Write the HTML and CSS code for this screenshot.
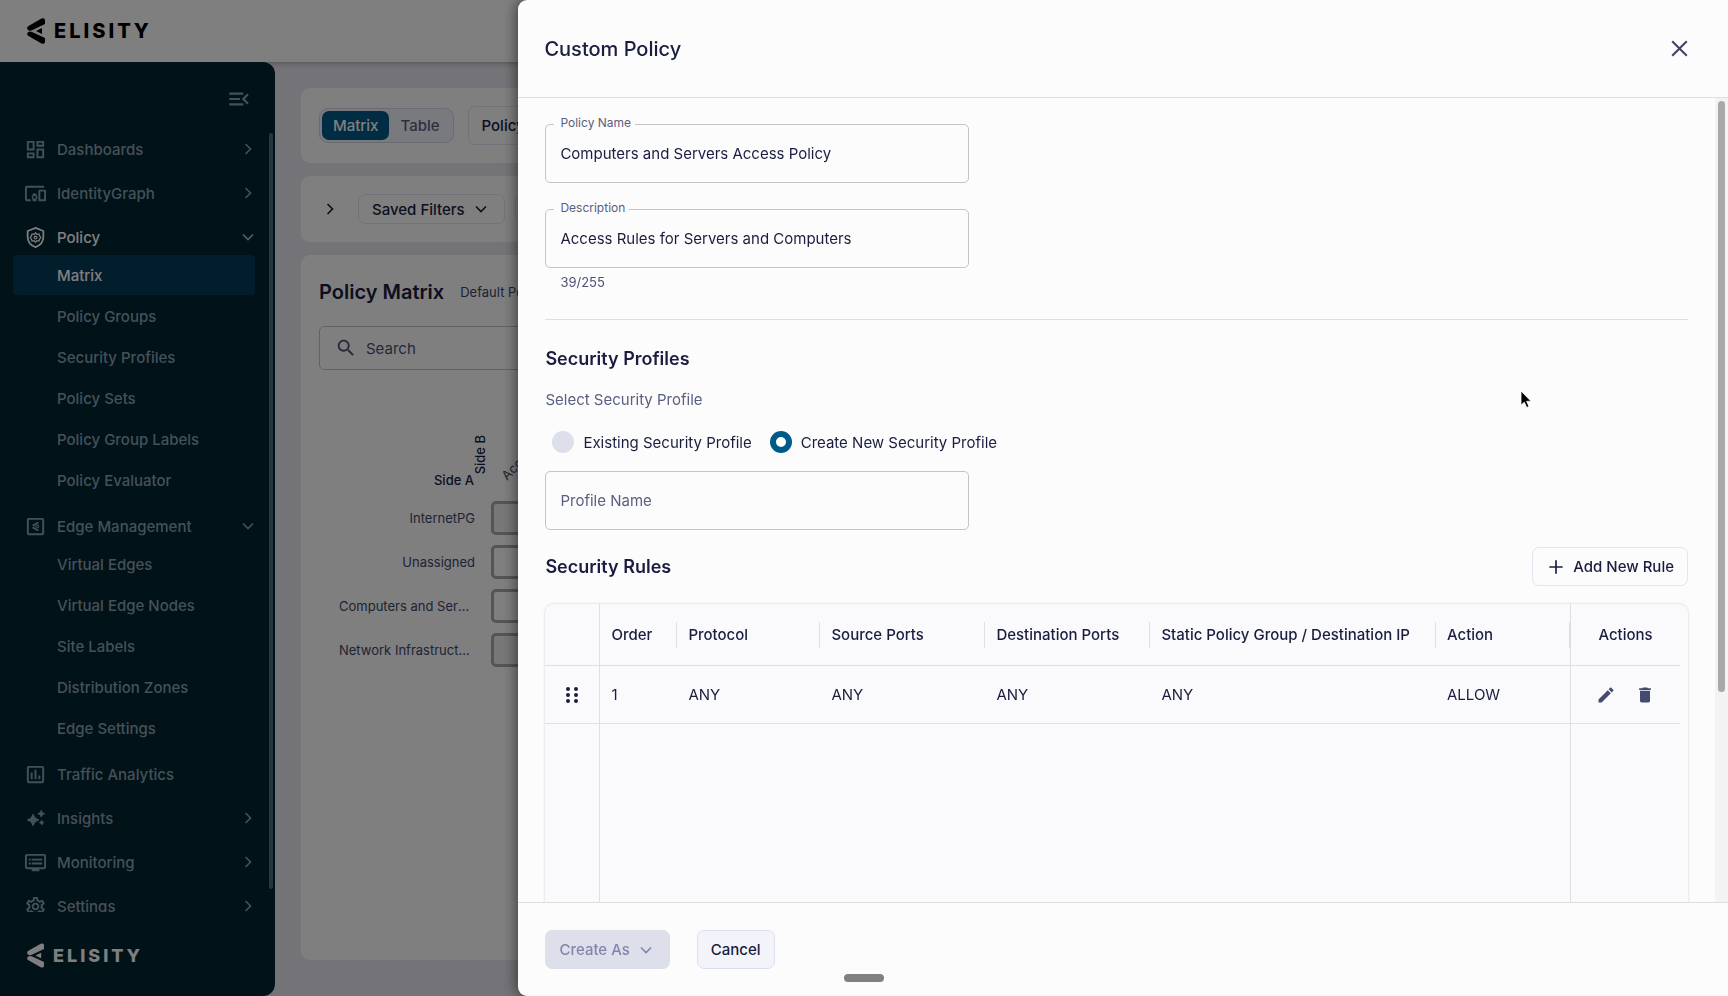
FILE: index.html
```html
<!DOCTYPE html>
<html lang="en">
<head>
  <meta charset="UTF-8" />
  <meta name="viewport" content="width=device-width, initial-scale=1.0" />
  <title>Elisity - Policy Matrix</title>
  <link rel="stylesheet" href="styles.css">
</head>
<body>
  <svg class="sprite" aria-hidden="true">
    <symbol id="chevron-right" viewBox="0 0 24 24"><path d="M9 6l6 6-6 6" fill="none" stroke="currentColor" stroke-width="2" /></symbol>
    <symbol id="chevron-down" viewBox="0 0 24 24"><path d="M6 9l6 6 6-6" fill="none" stroke="currentColor" stroke-width="2" /></symbol>
    <symbol id="logo" viewBox="0 0 18 26">
      <path d="M1.5 8L14.500.6Q18-.8 18 2.500V6L5 12.300Q2.500 13.200 1 12Q-1 9.500 1.500 8zM1.500 18L14.500 25.400Q18 26.800 18 23.500V20L5 13.900Q2.500 12.900 1 14.200Q-1 16.500 1.500 18z" fill="currentColor" />
      <path d="M9 13l6-3v6z" fill="currentColor" />
    </symbol>
  </svg>

  <header class="topbar">
    <a class="brand" href="#"><svg class="brand-mark"><use href="#logo" /></svg><span>ELISITY</span></a>
  </header>

  <div class="layout">
    <aside class="sidebar">
      <button class="collapse" aria-label="Collapse menu">
        <svg viewBox="0 0 24 24"><path d="M3 18h13v-2H3v2zM3 6v2h13V6H3zm0 7h10v-2H3v2zm18 2.59L17.42 12 21 8.41 19.59 7l-5 5 5 5L21 15.59z" /></svg>
      </button>
      <div class="nav-wrap">
        <nav class="nav">
          <a class="item" href="#">
            <svg viewBox="0 0 24 24"><path d="M19 5v2h-4V5h4M9 5v6H5V5h4m10 8v6h-4v-6h4M9 17v2H5v-2h4M21 3h-8v6h8V3zM11 3H3v10h8V3zm10 8h-8v10h8V11zm-10 4H3v6h8v-6z" /></svg>
            <span>Dashboards</span><svg class="arrow"><use href="#chevron-right" /></svg>
          </a>
          <a class="item" href="#">
            <svg viewBox="0 0 24 24"><path d="M3 6h18V4H3c-1.1 0-2 .9-2 2v12c0 1.1.9 2 2 2h4v-2H3V6zm10 6H9v1.78c-.61.55-1 1.33-1 2.22s.39 1.67 1 2.22V20h4v-1.78c.61-.55 1-1.34 1-2.22s-.39-1.67-1-2.22V12zm-2 5.5c-.83 0-1.5-.67-1.5-1.5s.67-1.5 1.5-1.5 1.5.67 1.5 1.5-.67 1.5-1.5 1.5zM22 8h-6c-.5 0-1 .5-1 1v10c0 .5.5 1 1 1h6c.5 0 1-.5 1-1V9c0-.5-.5-1-1-1zm-1 10h-4v-8h4v8z" /></svg>
            <span>IdentityGraph</span><svg class="arrow"><use href="#chevron-right" /></svg>
          </a>
          <div class="group">
            <a class="item open" href="#">
              <svg class="line" viewBox="0 0 24 24">
                <path d="M12 2l8.200 3.200v6c0 5-3.400 9-8.200 10.800-4.800-1.800-8.200-5.800-8.200-10.800v-6z" stroke-width="1.800" />
                <path d="M12 7l1.400 1.700 2.200-.400.700 2 1.200 1.700-1.200 1.700-.700 2-2.200-.400L12 17l-1.400-1.700-2.200.400-.700-2L6.500 12l1.200-1.700.700-2 2.200.400z" stroke-width="1.300" />
                <circle cx="12" cy="12" r="1.500" stroke-width="1.200" />
              </svg>
              <span>Policy</span><svg class="arrow"><use href="#chevron-down" /></svg>
            </a>
            <div class="sub">
              <a class="active" href="#">Matrix</a>
              <a href="#">Policy Groups</a>
              <a href="#">Security Profiles</a>
              <a href="#">Policy Sets</a>
              <a href="#">Policy Group Labels</a>
              <a href="#">Policy Evaluator</a>
            </div>
          </div>
          <div class="group">
            <a class="item" href="#">
              <svg class="line" viewBox="0 0 24 24">
                <rect x="4" y="4" width="16" height="16" rx="1" stroke-width="2" />
                <path d="M15 8l-6 3M9 13l6 3.200" stroke-width="2" />
                <path d="M11.500 12l3.500-1.500v3z" stroke-width="1" />
              </svg>
              <span>Edge Management</span><svg class="arrow"><use href="#chevron-down" /></svg>
            </a>
            <div class="sub">
              <a href="#">Virtual Edges</a>
              <a href="#">Virtual Edge Nodes</a>
              <a href="#">Site Labels</a>
              <a href="#">Distribution Zones</a>
              <a href="#">Edge Settings</a>
            </div>
          </div>
          <a class="item" href="#">
            <svg viewBox="0 0 24 24"><path d="M19 3H5c-1.100 0-2 .9-2 2v14c0 1.100.9 2 2 2h14c1.100 0 2-.9 2-2V5c0-1.100-.9-2-2-2zm0 16H5V5h14v14zM7 10h2v7H7zm4-3h2v10h-2zm4 6h2v4h-2z" /></svg>
            <span>Traffic Analytics</span>
          </a>
          <a class="item" href="#">
            <svg viewBox="0 0 24 24"><path d="M9.500 7.500l2 4 4 2-4 2-2 4-2-4-4-2 4-2zM18 3.500l1.100 2.400 2.400 1.100-2.400 1.100L18 10.500l-1.100-2.400L14.500 7l2.400-1.100zM18.500 14l.8 1.500 1.500.8-1.500.8-.8 1.500-.8-1.500-1.500-.8 1.500-.8z" stroke="currentColor" stroke-width="1" /></svg>
            <span>Insights</span><svg class="arrow"><use href="#chevron-right" /></svg>
          </a>
          <a class="item" href="#">
            <svg viewBox="0 0 24 24"><path d="M21 3H3c-1.100 0-2 .9-2 2v12c0 1.100.9 2 2 2h5v2h8v-2h5c1.100 0 1.990-.9 1.990-2L23 5c0-1.100-.9-2-2-2zm0 14H3V5h18v12zm-2-9H8v2h11V8zm0 4H8v2h11v-2zM7 8H5v2h2V8zm0 4H5v2h2v-2z" /></svg>
            <span>Monitoring</span><svg class="arrow"><use href="#chevron-right" /></svg>
          </a>
          <a class="item" href="#">
            <svg viewBox="0 0 24 24"><path d="M19.430 12.980c.04-.32.07-.64.07-.98 0-.34-.03-.66-.07-.98l2.110-1.650c.19-.15.24-.42.12-.64l-2-3.460c-.09-.16-.26-.25-.44-.25-.06 0-.12.01-.17.03l-2.490 1c-.52-.4-1.080-.73-1.690-.98l-.38-2.650C14.460 2.180 14.250 2 14 2h-4c-.25 0-.46.18-.49.42l-.38 2.650c-.61.25-1.170.59-1.690.98l-2.490-1c-.06-.02-.12-.03-.18-.03-.17 0-.34.09-.43.25l-2 3.460c-.13.22-.07.49.12.64l2.110 1.650c-.04.32-.07.65-.07.98 0 .33.03.66.07.98l-2.110 1.650c-.19.15-.24.42-.12.64l2 3.460c.09.16.26.25.44.25.06 0 .12-.01.17-.03l2.490-1c.52.4 1.080.73 1.690.98l.38 2.650c.03.24.24.42.49.42h4c.25 0 .46-.18.49-.42l.38-2.650c.61-.25 1.170-.59 1.690-.98l2.490 1c.06.02.12.03.18.03.17 0 .34-.09.43-.25l2-3.460c.12-.22.07-.49-.12-.64l-2.110-1.650zm-1.980-1.710c.04.31.05.52.05.73 0 .21-.02.43-.05.73l-.14 1.130.89.7 1.080.84-.7 1.210-1.270-.51-1.040-.42-.9.68c-.43.32-.84.56-1.250.73l-1.060.43-.16 1.130-.2 1.350h-1.400l-.19-1.350-.16-1.130-1.060-.43c-.43-.18-.83-.41-1.230-.71l-.91-.7-1.060.43-1.270.51-.7-1.210 1.080-.84.89-.7-.14-1.130c-.03-.31-.05-.54-.05-.74s.02-.43.05-.73l.14-1.130-.89-.7-1.080-.84.7-1.210 1.270.51 1.040.42.9-.68c.43-.32.84-.56 1.250-.73l1.060-.43.16-1.130.2-1.350h1.390l.19 1.350.16 1.130 1.060.43c.43.18.83.41 1.230.71l.91.7 1.060-.43 1.270-.51.7 1.210-1.070.85-.89.7.14 1.130zM12 8c-2.210 0-4 1.790-4 4s1.790 4 4 4 4-1.790 4-4-1.790-4-4-4zm0 6c-1.100 0-2-.9-2-2s.9-2 2-2 2 .9 2 2-.9 2-2 2z" /></svg>
            <span>Settings</span><svg class="arrow"><use href="#chevron-right" /></svg>
          </a>
        </nav>
        <div class="nav-track"><div class="nav-thumb"></div></div>
      </div>
      <div class="sidebar-foot">
        <a class="brand small" href="#"><svg class="brand-mark"><use href="#logo" /></svg><span>ELISITY</span></a>
      </div>
    </aside>

    <main class="main">
      <section class="card toolbar">
        <div class="segmented">
          <button class="on">Matrix</button>
          <button>Table</button>
        </div>
        <button class="btn outline">Policy Set</button>
      </section>
      <section class="card filters">
        <button class="icon-btn" aria-label="Expand filters"><svg><use href="#chevron-right" /></svg></button>
        <button class="btn outline compact">Saved Filters <svg><use href="#chevron-down" /></svg></button>
        <button class="btn outline compact">Filters</button>
      </section>
      <section class="card matrix-card">
        <div class="matrix-title">
          <h1>Policy Matrix</h1>
          <span>Default Policy Set</span>
        </div>
        <div class="search">
          <svg viewBox="0 0 24 24"><path d="M15.500 14h-.79l-.28-.27C15.410 12.590 16 11.110 16 9.500 16 5.910 13.090 3 9.500 3S3 5.910 3 9.500 5.910 16 9.500 16c1.610 0 3.090-.59 4.230-1.570l.27.28v.79l5 4.990L20.490 19l-4.990-5zm-6 0C7.010 14 5 11.990 5 9.500S7.010 5 9.500 5 14 7.010 14 9.500 11.990 14 9.500 14z" /></svg>
          <input type="text" placeholder="Search" aria-label="Search" />
        </div>
        <div class="matrix">
          <div class="axes"><span class="side-a">Side A</span><span class="side-b">Side B</span></div>
          <div class="col-head"><span>Access Points</span></div>
          <div class="row-label">InternetPG</div><div class="cell filled"></div>
          <div class="row-label">Unassigned</div><div class="cell"></div>
          <div class="row-label">Computers and Servers</div><div class="cell"></div>
          <div class="row-label">Network Infrastructure</div><div class="cell filled"></div>
        </div>
      </section>
    </main>
  </div>

  <div class="backdrop"></div>

  <div class="drawer" role="dialog" aria-labelledby="drawer-title">
    <div class="drawer-head">
      <h2 id="drawer-title">Custom Policy</h2>
      <button class="close" aria-label="Close"><svg viewBox="0 0 24 24"><path d="M5 5l14 14M19 5L5 19" fill="none" stroke="currentColor" stroke-width="2" /></svg></button>
    </div>

    <div class="drawer-body">
      <form class="content">
        <div class="field">
          <label for="policy-name">Policy Name</label>
          <input type="text" id="policy-name" value="Computers and Servers Access Policy" />
        </div>
        <div class="field">
          <label for="description">Description</label>
          <input type="text" id="description" value="Access Rules for Servers and Computers" />
          <p class="helper">39/255</p>
        </div>
        <hr />
        <h3>Security Profiles</h3>
        <p class="hint" id="profile-hint">Select Security Profile</p>
        <div class="radios" role="radiogroup" aria-labelledby="profile-hint">
          <label><input type="radio" name="profile" />Existing Security Profile</label>
          <label><input type="radio" name="profile" checked />Create New Security Profile</label>
        </div>
        <div class="field">
          <input type="text" id="profile-name" placeholder="Profile Name" aria-label="Profile Name" />
        </div>
        <div class="rules-head">
          <h3>Security Rules</h3>
          <button type="button" class="btn outline"><svg viewBox="0 0 24 24"><path d="M12 4v16M4 12h16" fill="none" stroke="currentColor" stroke-width="2" /></svg>Add New Rule</button>
        </div>
        <div class="table-wrap">
          <table class="rules">
            <colgroup>
              <col class="c-drag"><col class="c-order"><col class="c-protocol"><col class="c-ports"><col class="c-ports"><col><col class="c-action"><col class="c-actions">
            </colgroup>
            <thead>
              <tr>
                <th class="pin-left"></th>
                <th><span>Order</span></th>
                <th><span>Protocol</span></th>
                <th><span>Source Ports</span></th>
                <th><span>Destination Ports</span></th>
                <th><span>Static Policy Group / Destination IP</span></th>
                <th><span>Action</span></th>
                <th class="pin-right">Actions</th>
              </tr>
            </thead>
            <tbody>
              <tr>
                <td class="pin-left">
                  <svg class="drag" viewBox="0 0 14 18"><circle cx="3" cy="3" r="2" /><circle cx="11" cy="3" r="2" /><circle cx="3" cy="9" r="2" /><circle cx="11" cy="9" r="2" /><circle cx="3" cy="15" r="2" /><circle cx="11" cy="15" r="2" /></svg>
                </td>
                <td>1</td>
                <td>ANY</td>
                <td>ANY</td>
                <td>ANY</td>
                <td>ANY</td>
                <td>ALLOW</td>
                <td class="pin-right">
                  <div class="row-actions">
                    <button type="button" aria-label="Edit rule"><svg viewBox="0 0 24 24"><path d="M3 17.250V21h3.750L17.810 9.940l-3.750-3.750L3 17.250zM20.710 7.040c.39-.39.39-1.020 0-1.410l-2.340-2.340c-.39-.39-1.020-.39-1.410 0l-1.830 1.830 3.750 3.750 1.830-1.830z" /></svg></button>
                    <button type="button" aria-label="Delete rule"><svg viewBox="0 0 24 24"><path d="M6 19c0 1.100.9 2 2 2h8c1.100 0 2-.9 2-2V7H6v12zM19 4h-3.500l-1-1h-5l-1 1H5v2h14V4z" /></svg></button>
                  </div>
                </td>
              </tr>
              <tr class="filler">
                <td class="pin-left"></td><td colspan="6"></td><td class="pin-right"></td>
              </tr>
            </tbody>
          </table>
        </div>
      </form>
      <div class="track"><div class="thumb"></div></div>
    </div>

    <div class="drawer-foot">
      <button class="btn create" disabled>Create As <svg><use href="#chevron-down" /></svg></button>
      <button class="btn cancel">Cancel</button>
    </div>
  </div>

  <div class="grab-handle"></div>
  <svg class="pointer" viewBox="0 0 12 19"><path d="M1 1v14.200l3.300-3 2.400 5.300 2.300-1-2.400-5.200H11z" fill="#000" stroke="#fff" stroke-width=".8" /></svg>
</body>
</html>
```
FILE: styles.css
```css
* {
  box-sizing: border-box;
}
body {
  margin: 0;
  height: 100vh;
  display: flex;
  flex-direction: column;
  overflow: hidden;
  font-family: Inter, "Liberation Sans", sans-serif;
  font-size: 15px;
  color: #1a1d3f;
  background: #e8e9f0;
}
h1, h2, h3, p {
  margin: 0;
}
a {
  color: inherit;
  text-decoration: none;
}
button, input {
  font: inherit;
  color: inherit;
}
button {
  padding: 0;
  border: none;
  background: none;
}
svg {
  display: block;
  flex: none;
  width: 20px;
  height: 20px;
  fill: currentColor;
}
svg.line {
  fill: none;
  stroke: currentColor;
}
.sprite {
  position: absolute;
  width: 0;
  height: 0;
}

/* top bar */
.topbar {
  flex: none;
  height: 62px;
  display: flex;
  align-items: center;
  padding: 0 27px;
  background: #fff;
  box-shadow: 0 1px 6px rgba(0, 0, 0, 0.3);
}
.brand {
  display: flex;
  align-items: center;
  gap: 9px;
  color: #000;
  font-size: 20px;
  font-weight: 800;
  letter-spacing: 3px;
}
.brand-mark {
  width: 18px;
  height: 26px;
}
.brand.small {
  color: #fff;
  font-size: 18px;
}
.brand.small .brand-mark {
  width: 17px;
  height: 25px;
}

.layout {
  flex: 1;
  min-height: 0;
  display: flex;
}

/* sidebar */
.sidebar {
  position: relative;
  width: 275px;
  flex: none;
  display: flex;
  flex-direction: column;
  background: #022433;
  color: #8ba3b0;
  font-weight: 500;
  border-radius: 0 12px 12px 0;
}
.collapse {
  align-self: flex-end;
  margin: 24px 23px 19px 0;
}
.collapse svg {
  width: 26px;
  height: 26px;
}
.nav-wrap {
  flex: 1;
  min-height: 0;
  display: flex;
}
.nav {
  flex: 1;
  display: flex;
  flex-direction: column;
  gap: 8px;
  padding-left: 13px;
  overflow: hidden;
}
.item {
  flex: none;
  height: 36px;
  display: flex;
  align-items: center;
  gap: 10px;
  padding: 0 7px 0 11px;
}
.item svg {
  width: 23px;
  height: 23px;
}
.item span {
  flex: 1;
}
.item .arrow {
  width: 20px;
  height: 20px;
}
.item.open {
  color: #fff;
}
.item.open .arrow {
  color: #b0bfc8;
}
.sub {
  display: flex;
  flex-direction: column;
  gap: 1px;
  padding-right: 10px;
}
.sub a {
  height: 40px;
  display: flex;
  align-items: center;
  padding-left: 44px;
  border-radius: 4px;
}
.sub .active {
  background: #043a57;
  color: #fff;
}
.nav-track {
  width: 10px;
  flex: none;
  padding: 2px 2px 0 4px;
}
.nav-thumb {
  height: 97%;
  border-radius: 2px;
  background: #4c6a7c;
}
.sidebar-foot {
  height: 84px;
  padding: 2px 27px 0;
  display: flex;
  align-items: center;
}

/* page behind the drawer */
.main {
  flex: 1;
  min-width: 0;
  display: flex;
  flex-direction: column;
  gap: 13px;
  padding: 26px 26px 36px;
}
.card {
  background: #fff;
  border-radius: 9px;
  padding: 18px;
}
.toolbar {
  display: flex;
  align-items: center;
  gap: 14px;
}
.segmented {
  display: flex;
  padding: 2px;
  border: 1px solid #d5d7e6;
  border-radius: 9px;
  background: #f3f4fa;
}
.segmented button {
  height: 29px;
  padding: 0 11px;
  border-radius: 7px;
  font-weight: 500;
  color: #5b5f80;
}
.segmented .on {
  background: #005a87;
  color: #fff;
}
.btn {
  display: flex;
  align-items: center;
  height: 39px;
  padding: 0 13px;
  border: 1px solid #e4e5f4;
  border-radius: 7px;
  font-weight: 500;
  white-space: nowrap;
}
.btn.compact {
  height: 30px;
  gap: 6px;
}
.filters {
  display: flex;
  align-items: center;
  gap: 10px;
}
.icon-btn {
  margin: 0 8px 0 1px;
}
.matrix-card {
  flex: 1;
  min-height: 0;
}
.matrix-title {
  display: flex;
  align-items: center;
  gap: 16px;
  height: 38px;
}
.matrix-title h1 {
  font-size: 20px;
  font-weight: 600;
}
.matrix-title span {
  font-size: 13px;
  color: #41456a;
}
.search {
  display: flex;
  align-items: center;
  gap: 9px;
  height: 44px;
  margin-top: 15px;
  padding: 0 15px;
  border: 1px solid #c5c6d0;
  border-radius: 5px;
  color: #4c5075;
}
.search svg {
  width: 22px;
  height: 22px;
}
.search input {
  flex: 1;
  border: none;
  background: none;
  padding: 0;
}
.search input::placeholder {
  color: #4c5075;
  opacity: 1;
}
.matrix {
  display: grid;
  grid-template-columns: 136px 1fr;
  grid-template-rows: 121px;
  grid-auto-rows: 34px;
  gap: 10px 16px;
  padding-left: 20px;
}
.axes {
  display: flex;
  align-items: flex-end;
  justify-content: flex-end;
  font-size: 13px;
  font-weight: 500;
}
.side-b {
  writing-mode: vertical-rl;
  transform: rotate(180deg);
  line-height: 13px;
  margin: 0 -12px 17px 0;
}
.side-a {
  margin-bottom: 3px;
}
.col-head {
  display: flex;
  align-items: flex-end;
  padding: 0 0 8px 18px;
  font-size: 13px;
  color: #41456a;
}
.col-head span {
  transform: rotate(-45deg);
  transform-origin: left bottom;
}
.row-label {
  line-height: 34px;
  font-size: 13px;
  color: #41456a;
  text-align: right;
  white-space: nowrap;
  overflow: hidden;
  text-overflow: ellipsis;
}
.cell {
  border: 3px solid #aaaaaa;
  border-radius: 5px;
}
.cell.filled {
  background: #f0f0f0;
}

.backdrop {
  position: fixed;
  inset: 0;
  background: rgba(0, 0, 0, 0.5);
}

/* drawer */
.drawer {
  position: fixed;
  top: 0;
  right: 0;
  bottom: 0;
  width: 70%;
  display: flex;
  flex-direction: column;
  background: #fcfcfc;
  border-radius: 9px 0 0 9px;
  box-shadow: -2px 0 14px rgba(0, 0, 0, 0.5);
  overflow: hidden;
}
.drawer-head {
  flex: none;
  height: 98px;
  display: flex;
  align-items: center;
  justify-content: space-between;
  padding: 0 36px 0 26px;
  border-bottom: 1px solid #dfdfe1;
}
.drawer-head h2 {
  font-size: 20px;
  font-weight: 500;
}
.close svg {
  width: 25px;
  height: 25px;
  color: #3f4468;
}
.drawer-body {
  flex: 1;
  min-height: 0;
  display: flex;
}
.content {
  flex: 1;
  min-width: 0;
  padding: 26px 27px 0;
  overflow: hidden;
}
.track {
  width: 13px;
  flex: none;
  padding: 3px;
  background: #f3f3f3;
}
.thumb {
  height: 74%;
  border-radius: 4px;
  background: #a8a8a8;
}
.field {
  position: relative;
  max-width: 424px;
}
.field + .field {
  margin-top: 26px;
}
.field label {
  position: absolute;
  top: -9px;
  left: 9px;
  padding: 0 4px 0 6px;
  background: #fcfcfc;
  font-size: 12px;
  line-height: 16px;
  color: #5a5e80;
}
.field input {
  display: block;
  width: 100%;
  height: 59px;
  padding: 0 14px;
  border: 1px solid #c4c4c6;
  border-radius: 5px;
  background: none;
}
.field input::placeholder {
  color: #5a5e80;
  opacity: 1;
}
.helper {
  margin: 4px 15px 0;
  font-size: 13px;
  line-height: 20px;
  color: #4c5075;
}
hr {
  margin: 27px 0;
  border: none;
  border-top: 1px solid #dfdfe1;
}
h3 {
  font-size: 18px;
  line-height: 24px;
  font-weight: 600;
}
.hint {
  margin-top: 17px;
  line-height: 24px;
  color: #5a5e80;
}
.radios {
  display: flex;
  gap: 18px;
  height: 22px;
  margin: 19px 0 18px;
  padding-left: 7px;
}
.radios label {
  display: flex;
  align-items: center;
  gap: 9px;
}
.radios input {
  appearance: none;
  width: 22px;
  height: 22px;
  margin: 0;
  border-radius: 50%;
  background: #dddfea;
}
.radios input:checked {
  border: 6px solid #005a87;
  background: #fff;
}
.rules-head {
  display: flex;
  align-items: center;
  justify-content: space-between;
  margin: 17px 0 18px;
}
.rules-head .btn {
  gap: 7px;
}

/* rules table */
.table-wrap {
  height: 420px;
  padding-right: 8px;
  background: #fafafc;
  border-radius: 9px;
  box-shadow: 0 0 3px rgba(0, 0, 0, 0.18);
}
.rules {
  width: 100%;
  height: 100%;
  table-layout: fixed;
  border-collapse: separate;
  border-spacing: 0;
}
.c-drag { width: 55px; }
.c-order { width: 77px; }
.c-protocol { width: 143px; }
.c-ports { width: 165px; }
.c-action { width: 134px; }
.c-actions { width: 110px; }
.rules th, .rules td {
  height: 58px;
  padding: 0 0 0 11px;
  text-align: left;
  white-space: nowrap;
  border-bottom: 1px solid #dfdfe3;
}
.rules th {
  height: 62px;
  font-weight: 500;
}
.rules th span {
  display: block;
  line-height: 26px;
  border-right: 1px solid #dfdfe3;
}
.rules .pin-left {
  padding: 0;
  border-right: 1px solid #dfdfe3;
}
.rules .pin-right {
  padding: 0;
  text-align: center;
  border-left: 1px solid #dfdfe3;
}
.rules .filler td {
  height: auto;
  border-bottom: none;
}
.drag {
  width: 14px;
  height: 18px;
  margin: 0 auto;
}
.row-actions {
  display: flex;
  justify-content: center;
  gap: 19px;
  color: #454a70;
}

.drawer-foot {
  flex: none;
  height: 94px;
  display: flex;
  align-items: center;
  gap: 27px;
  padding: 0 27px;
  border-top: 1px solid #dfdfe1;
}
.create {
  gap: 6px;
  border-color: #dddfea;
  background: #dddfea;
  color: #8085ab;
}
.cancel {
  border-color: #dddff0;
  background: #f3f4fa;
}
.grab-handle {
  position: fixed;
  left: 50%;
  bottom: 14px;
  width: 40px;
  height: 8px;
  margin-left: -20px;
  border-radius: 4px;
  background: #808080;
}
.pointer {
  position: fixed;
  left: 1520px;
  top: 390px;
  width: 12px;
  height: 19px;
}
```
